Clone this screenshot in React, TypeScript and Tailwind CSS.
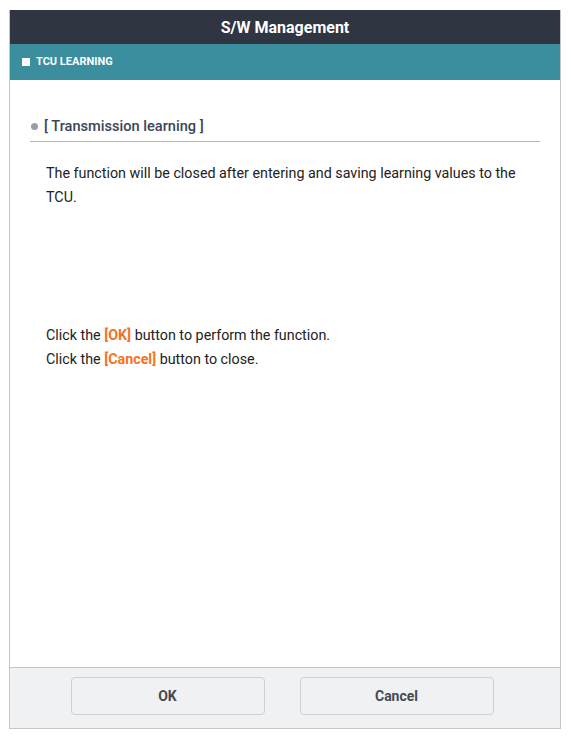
export default function App() {
  return (
    <div className="min-h-[738px] bg-white pt-[10px] pl-[9px] font-['Roboto','Liberation_Sans',sans-serif]">
      <div className="flex w-[552px] flex-col border border-t-0 border-[#c6c6c6]">
        {/* Title bar */}
        <div className="flex h-[34px] items-center justify-center bg-[#2f3541] pt-[2px] text-[16px] font-bold text-white">
          S/W Management
        </div>

        {/* Section bar */}
        <div className="flex h-[36px] items-center gap-[6px] bg-[#3a8e9e] pl-[12px] text-[11px] font-bold text-white">
          <span className="h-[8px] w-[8px] bg-white" />
          TCU LEARNING
        </div>

        {/* Body */}
        <div className="h-[587px] bg-white px-[20px] pt-[36px]">
          <div className="flex items-center gap-[6px] border-b border-[#9cc0ca] pb-[5px] pl-[1px]">
            <span className="h-[7px] w-[7px] rounded-full bg-[#9a9ea5]" />
            <span className="text-[14.6px] leading-[20px] font-medium text-[#3a4558]">[ Transmission learning ]</span>
          </div>
          <p className="mt-[19px] pl-[16px] pr-[8px] text-[14.3px] leading-[24px] text-[#222]">
            The function will be closed after entering and saving learning values to the TCU.
          </p>
          <div className="mt-[114px] pl-[16px] text-[14.3px] leading-[24px] text-[#222]">
            <p>
              Click the <span className="font-bold text-[#f47321]">[OK]</span> button to perform the function.
            </p>
            <p>
              Click the <span className="font-bold text-[#f47321]">[Cancel]</span> button to close.
            </p>
          </div>
        </div>

        {/* Footer */}
        <div className="flex h-[61px] items-start justify-center gap-[35px] border-t border-[#c6c6c6] bg-[#f0f1f3] pt-[9px] pr-[6px]">
          <button className="flex h-[38px] w-[194px] items-center justify-center rounded-[4px] border border-[#cfd0d3] bg-[#f0f1f3] text-[14px] font-bold text-[#454a52]">
            OK
          </button>
          <button className="flex h-[38px] w-[194px] items-center justify-center rounded-[4px] border border-[#cfd0d3] bg-[#f0f1f3] text-[14px] font-bold text-[#454a52]">
            Cancel
          </button>
        </div>
      </div>
    </div>
  );
}
